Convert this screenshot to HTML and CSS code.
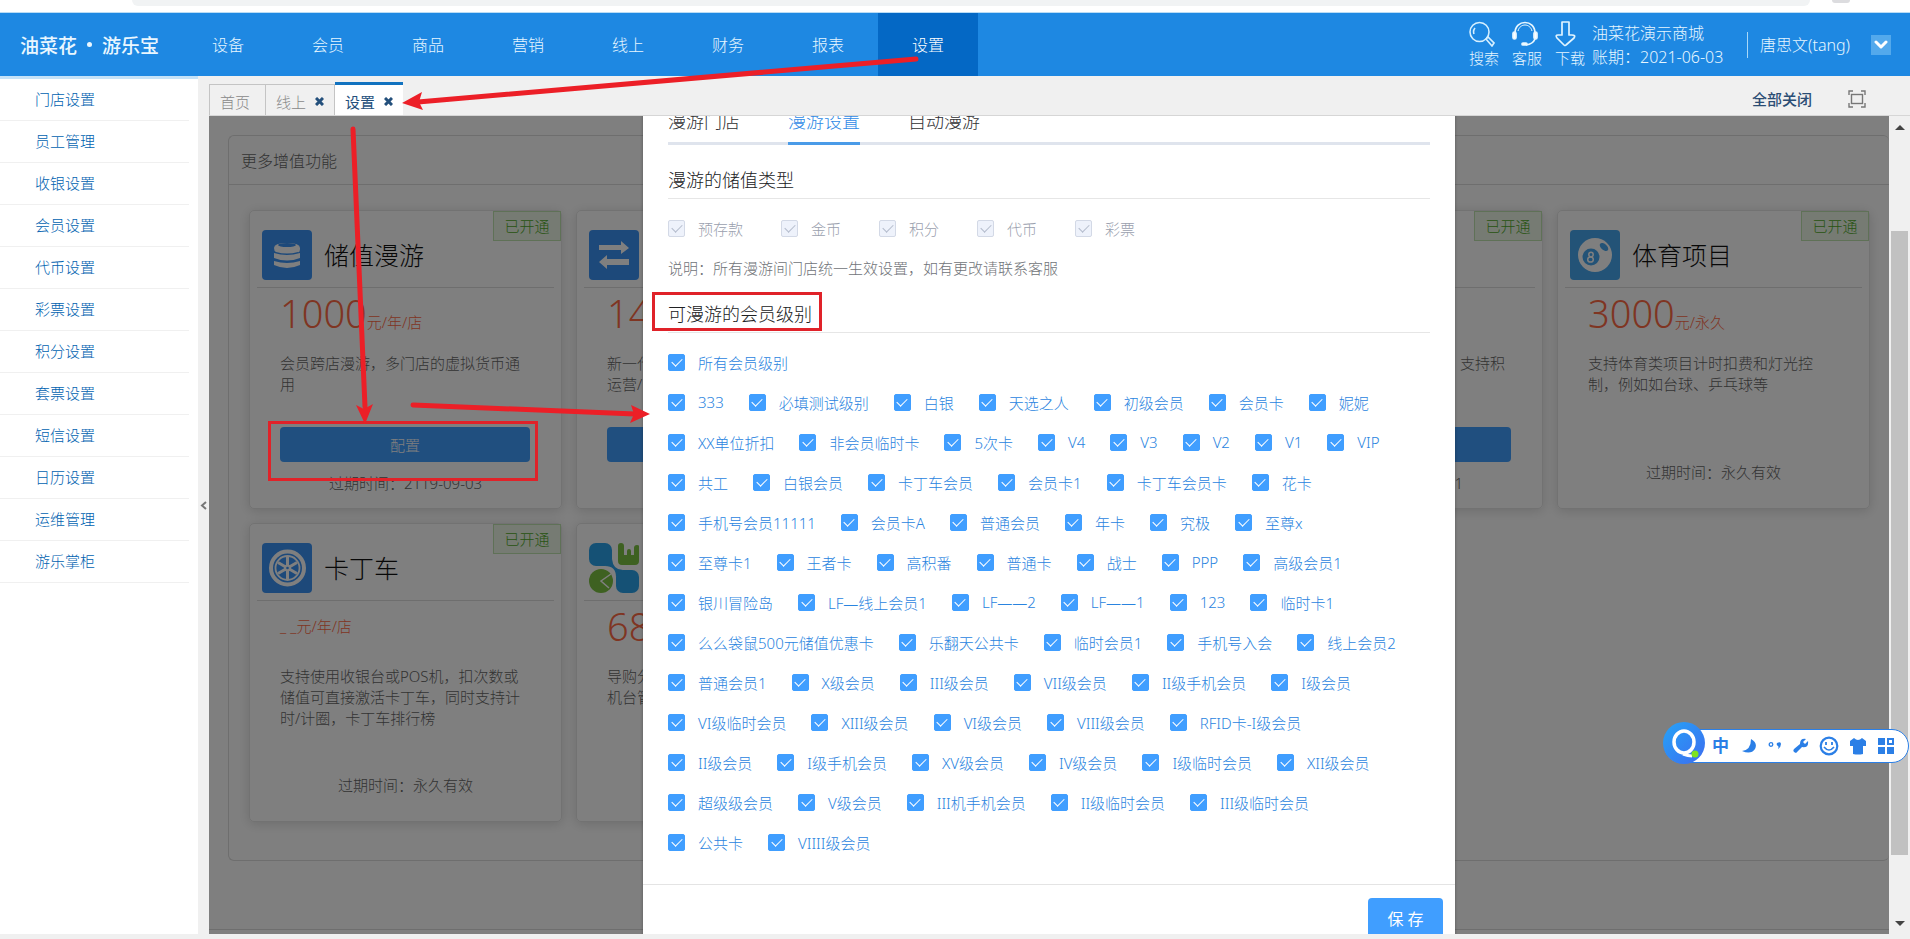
FILE: index.html
```html
<!DOCTYPE html>
<html lang="zh-CN">
<head>
<meta charset="utf-8">
<title>设置</title>
<link rel="stylesheet" href="styles.css">
</head>
<body>
<div class="browser-edge"><div class="address-pill"></div><div class="browser-dot"></div></div>
<header class="topbar">
  <div class="logo"><span>油菜花</span><i class="logo-dot"></i><span>游乐宝</span></div>
  <nav class="main-nav">
    <a href="#">设备</a><a href="#">会员</a><a href="#">商品</a><a href="#">营销</a><a href="#">线上</a><a href="#">财务</a><a href="#">报表</a><a href="#" class="active">设置</a>
  </nav>
  <div class="tools">
    <a href="#" class="tool"><svg width="26" height="26" viewBox="0 0 26 26" fill="none" stroke="#d5efff" stroke-width="1.6"><circle cx="10.500" cy="11" r="9.500"/><path d="M5 13a6 6 0 0 1 1-6M17 18l2-2 6 6-2 3z"/></svg>搜索</a>
    <a href="#" class="tool"><svg width="26" height="26" viewBox="0 0 26 26" fill="none" stroke="#e8f7ff" stroke-width="1.7"><path d="M3 12C3-2 23-2 23 12M23 18q-2 5-9 6"/><path d="M6 10C8 2 18 2 20 10" stroke-width="1"/><rect x="1" y="11" width="3" height="7" rx="1.500" fill="#fff"/><rect x="22" y="11" width="3" height="7" rx="1.500" fill="#fff"/><rect x="10" y="22" width="5" height="2" rx="1" fill="#fff"/></svg>客服</a>
    <a href="#" class="tool"><svg width="22" height="26" viewBox="0 0 22 26" fill="none" stroke="#e0f4ff" stroke-width="1.7" stroke-linejoin="round"><path d="M7 1h7v13h3q4 0 2 3l-8 7q-1 1-2 0l-7-7q-2-3 1-3h4z"/></svg>下载</a>
  </div>
  <div class="store"><span>油菜花演示商城</span><span>账期：2021-06-03</span></div>
  <div class="user">唐思文(tang)</div>
  <button class="user-menu" aria-label="用户菜单"><svg width="14" height="10" viewBox="0 0 14 10" fill="none" stroke="#fff" stroke-width="3" stroke-linecap="round" stroke-linejoin="round"><path d="M2 2l5 5 5-5"/></svg></button>
</header>
<div class="workspace">
  <aside class="sidebar">
    <a href="#">门店设置</a><a href="#">员工管理</a><a href="#">收银设置</a><a href="#">会员设置</a><a href="#">代币设置</a><a href="#">彩票设置</a><a href="#">积分设置</a><a href="#">套票设置</a><a href="#">短信设置</a><a href="#">日历设置</a><a href="#">运维管理</a><a href="#">游乐掌柜</a>
  </aside>
  <button class="collapse" aria-label="收起"><svg width="7" height="9" viewBox="0 0 7 9" fill="none" stroke="#777" stroke-width="2"><path d="M6 1L2 4.500 6 8"/></svg></button>
  <div class="page">
    <div class="tabbar">
      <div class="tab">首页</div>
      <div class="tab">线上<button class="close" aria-label="关闭"><svg width="9" height="9" viewBox="0 0 9 9" stroke="#24507c" stroke-width="3"><path d="M1 1l7 7M8 1L1 8"/></svg></button></div>
      <div class="tab current">设置<button class="close" aria-label="关闭"><svg width="9" height="9" viewBox="0 0 9 9" stroke="#24507c" stroke-width="3"><path d="M1 1l7 7M8 1L1 8"/></svg></button></div>
      <button class="close-all">全部关闭</button>
      <button class="fullscreen" aria-label="全屏"><svg width="18" height="18" viewBox="0 0 18 18" fill="none" stroke="#777" stroke-width="1.400"><path d="M1 5V1h4M13 1h4v4M17 13v4h-4M5 17H1v-4"/><rect x="3.500" y="4.500" width="11" height="9"/></svg></button>
    </div>
    <div class="stage">
      <main class="view">
        <div class="sheet">
          <section class="panel">
            <h2 class="panel-title">更多增值功能</h2>
            <div class="cards">
              <article class="card">
                <span class="badge">已开通</span>
                <div class="card-head"><svg class="card-icon" viewBox="0 0 50 50"><rect width="50" height="50" rx="4" fill="#3a92f5"/><path fill="#fff" d="M12 18q0-5 13-5t13 5-2 4q-11 3-22 0-2-1-2-4z"/><ellipse cx="25" cy="15" rx="9" ry="2" fill="#3a92f5"/><path fill="#fff" d="M12 23q13 4 26 0v5q-13 5-26 0zM12 31q13 4 26 0v4q-13 6-26 0z"/></svg><h3>储值漫游</h3></div>
                <p class="price"><b>1000</b>元/年/店</p>
                <p class="desc">会员跨店漫游，多门店的虚拟货币通用</p>
                <div class="action"><button class="config">配置</button></div>
                <p class="expire">过期时间：2119-09-03</p>
              </article>
              <article class="card">
                <div class="card-head"><svg class="card-icon" viewBox="0 0 50 50"><rect width="50" height="50" rx="4" fill="#3a92f5"/><path fill="#fff" d="M10 15h22v-4l8 7-8 6v-4H10zM40 29H18v-4l-8 7 8 7v-4h22z"/></svg></div>
                <p class="price"><b>14</b></p>
                <p class="desc">新一代<br>运营/</p>
                <div class="action"><button class="config" aria-label="配置"></button></div>
              </article>
              <article class="card"></article>
              <article class="card">
                <span class="badge">已开通</span>
                <div class="card-head"></div>
                <p class="price"></p>
                <p class="desc desc-end">支持积</p>
                <div class="action"><button class="config" aria-label="配置"></button></div>
                <p class="expire">过期时间：2120-01-01</p>
              </article>
              <article class="card">
                <span class="badge">已开通</span>
                <div class="card-head"><svg class="card-icon" viewBox="0 0 50 50"><rect width="50" height="50" rx="4" fill="#46a6ee"/><circle cx="25" cy="25" r="17" fill="#fff"/><circle cx="21" cy="27" r="8.500" fill="#46a6ee"/><ellipse cx="34" cy="17" rx="5" ry="3" transform="rotate(40 34 17)" fill="#46a6ee"/><g fill="none" stroke="#fff" stroke-width="1.500"><ellipse cx="21" cy="24.500" rx="2.200" ry="2.300"/><ellipse cx="20.500" cy="29.500" rx="2.800" ry="2.600"/></g></svg><h3>体育项目</h3></div>
                <p class="price"><b>3000</b>元/永久</p>
                <p class="desc">支持体育类项目计时扣费和灯光控制，例如如台球、乒乓球等</p>
                <div class="action"></div>
                <p class="expire">过期时间：永久有效</p>
              </article>
              <article class="card">
                <span class="badge">已开通</span>
                <div class="card-head"><svg class="card-icon" viewBox="0 0 50 50"><rect width="50" height="50" rx="4" fill="#3a92f5"/><circle cx="25.500" cy="25" r="16.500" fill="none" stroke="#fff" stroke-width="4"/><circle cx="25.500" cy="25" r="12" fill="#3a92f5" stroke="#fff" stroke-width="1.800"/><g stroke="#fff" stroke-width="3"><path d="M25.500 14v22M16 19.500l19 11M35 19.500l-19 11"/></g><circle cx="25.500" cy="25" r="3.500" fill="#fff"/><circle cx="25.500" cy="25" r="1.300" fill="#3a92f5"/></svg><h3>卡丁车</h3></div>
                <p class="price">_ _元/年/店</p>
                <p class="desc">支持使用收银台或POS机，扣次数或储值可直接激活卡丁车，同时支持计时/计圈，卡丁车排行榜</p>
                <div class="action"></div>
                <p class="expire">过期时间：永久有效</p>
              </article>
              <article class="card">
                <div class="card-head"><svg class="card-icon" viewBox="0 0 50 50"><g fill="#2ba3ea"><rect width="23" height="23" rx="7"/><rect x="27" y="27" width="23" height="23" rx="7"/><path d="M16 23l7-7q1 11 11 11l-7 7q0-11-11-11z"/></g><g fill="#7cc242"><path d="M29 3q0-3 3-3t3 3v9h3V8q0-2 2-2t2 2v4h3V5q0-3 3-3t2 3v13q0 4-4 4H33q-4 0-4-4z"/><circle cx="12" cy="38" r="12"/></g><path d="M22 31L12 38l8 7" fill="none" stroke="#fff" stroke-width="1.500"/></svg></div>
                <p class="price"><b>68</b></p>
                <p class="desc">导购分<br>机台管</p>
              </article>
            </div>
          </section>
        </div>
        <div class="mask"></div>
        <div class="dialog" role="dialog" aria-label="漫游设置">
          <div class="dialog-body">
            <div class="dialog-tabs"><button>漫游门店</button><button class="on">漫游设置</button><button>自动漫游</button></div>
            <h4>漫游的储值类型</h4>
            <div class="types">
              <label class="check"><input type="checkbox" checked disabled>预存款</label><label class="check"><input type="checkbox" checked disabled>金币</label><label class="check"><input type="checkbox" checked disabled>积分</label><label class="check"><input type="checkbox" checked disabled>代币</label><label class="check"><input type="checkbox" checked disabled>彩票</label>
            </div>
            <p class="note">说明：所有漫游间门店统一生效设置，如有更改请联系客服</p>
            <h4>可漫游的会员级别</h4>
            <div class="levels level-all"><label class="check"><input type="checkbox" checked>所有会员级别</label></div>
            <div class="levels">
              <label class="check"><input type="checkbox" checked>333</label>
              <label class="check"><input type="checkbox" checked>必填测试级别</label>
              <label class="check"><input type="checkbox" checked>白银</label>
              <label class="check"><input type="checkbox" checked>天选之人</label>
              <label class="check"><input type="checkbox" checked>初级会员</label>
              <label class="check"><input type="checkbox" checked>会员卡</label>
              <label class="check"><input type="checkbox" checked>妮妮</label>
              <label class="check"><input type="checkbox" checked>XX单位折扣</label>
              <label class="check"><input type="checkbox" checked>非会员临时卡</label>
              <label class="check"><input type="checkbox" checked>5次卡</label>
              <label class="check"><input type="checkbox" checked>V4</label>
              <label class="check"><input type="checkbox" checked>V3</label>
              <label class="check"><input type="checkbox" checked>V2</label>
              <label class="check"><input type="checkbox" checked>V1</label>
              <label class="check"><input type="checkbox" checked>VIP</label>
              <label class="check"><input type="checkbox" checked>共工</label>
              <label class="check"><input type="checkbox" checked>白银会员</label>
              <label class="check"><input type="checkbox" checked>卡丁车会员</label>
              <label class="check"><input type="checkbox" checked>会员卡1</label>
              <label class="check"><input type="checkbox" checked>卡丁车会员卡</label>
              <label class="check"><input type="checkbox" checked>花卡</label>
              <label class="check"><input type="checkbox" checked>手机号会员11111</label>
              <label class="check"><input type="checkbox" checked>会员卡A</label>
              <label class="check"><input type="checkbox" checked>普通会员</label>
              <label class="check"><input type="checkbox" checked>年卡</label>
              <label class="check"><input type="checkbox" checked>究极</label>
              <label class="check"><input type="checkbox" checked>至尊x</label>
              <label class="check"><input type="checkbox" checked>至尊卡1</label>
              <label class="check"><input type="checkbox" checked>王者卡</label>
              <label class="check"><input type="checkbox" checked>高积番</label>
              <label class="check"><input type="checkbox" checked>普通卡</label>
              <label class="check"><input type="checkbox" checked>战士</label>
              <label class="check"><input type="checkbox" checked>PPP</label>
              <label class="check"><input type="checkbox" checked>高级会员1</label>
              <label class="check"><input type="checkbox" checked>银川冒险岛</label>
              <label class="check"><input type="checkbox" checked>LF—线上会员1</label>
              <label class="check"><input type="checkbox" checked>LF——2</label>
              <label class="check"><input type="checkbox" checked>LF——1</label>
              <label class="check"><input type="checkbox" checked>123</label>
              <label class="check"><input type="checkbox" checked>临时卡1</label>
              <label class="check"><input type="checkbox" checked>么么袋鼠500元储值优惠卡</label>
              <label class="check"><input type="checkbox" checked>乐翻天公共卡</label>
              <label class="check"><input type="checkbox" checked>临时会员1</label>
              <label class="check"><input type="checkbox" checked>手机号入会</label>
              <label class="check"><input type="checkbox" checked>线上会员2</label>
              <label class="check"><input type="checkbox" checked>普通会员1</label>
              <label class="check"><input type="checkbox" checked>X级会员</label>
              <label class="check"><input type="checkbox" checked>III级会员</label>
              <label class="check"><input type="checkbox" checked>VII级会员</label>
              <label class="check"><input type="checkbox" checked>II级手机会员</label>
              <label class="check"><input type="checkbox" checked>I级会员</label>
              <label class="check"><input type="checkbox" checked>VI级临时会员</label>
              <label class="check"><input type="checkbox" checked>XIII级会员</label>
              <label class="check"><input type="checkbox" checked>VI级会员</label>
              <label class="check"><input type="checkbox" checked>VIII级会员</label>
              <label class="check"><input type="checkbox" checked>RFID卡-I级会员</label>
              <label class="check"><input type="checkbox" checked>II级会员</label>
              <label class="check"><input type="checkbox" checked>I级手机会员</label>
              <label class="check"><input type="checkbox" checked>XV级会员</label>
              <label class="check"><input type="checkbox" checked>IV级会员</label>
              <label class="check"><input type="checkbox" checked>I级临时会员</label>
              <label class="check"><input type="checkbox" checked>XII级会员</label>
              <label class="check"><input type="checkbox" checked>超级级会员</label>
              <label class="check"><input type="checkbox" checked>V级会员</label>
              <label class="check"><input type="checkbox" checked>III机手机会员</label>
              <label class="check"><input type="checkbox" checked>II级临时会员</label>
              <label class="check"><input type="checkbox" checked>III级临时会员</label>
              <label class="check"><input type="checkbox" checked>公共卡</label>
              <label class="check"><input type="checkbox" checked>VIIII级会员</label>
            </div>
          </div>
          <div class="dialog-foot"><button class="save">保 存</button></div>
        </div>
      </main>
      <div class="scrollbar">
        <svg width="10" height="5" viewBox="0 0 10 5"><path d="M0 5l5-5 5 5z" fill="#444"/></svg>
        <div class="track"><div class="thumb"></div></div>
        <svg width="10" height="5" viewBox="0 0 10 5"><path d="M0 0l5 5 5-5z" fill="#444"/></svg>
      </div>
    </div>
  </div>
</div>

<svg class="marks" width="1910" height="939" viewBox="0 0 1910 939" fill="none">
  <g stroke="#e02229" stroke-width="3"><rect x="269.500" y="422.500" width="267" height="57"/><rect x="653.500" y="293.500" width="167" height="36"/></g>
  <g stroke="#ec1f27" stroke-width="5" stroke-linecap="round"><path d="M916 59L418 102M353 129l12 278M413 405l222 9"/></g>
  <g fill="#ec1f27"><path d="M402 103l20-11-3 10 4 8zM365 424l-9-19 8 4 9-5zM650 414l-20 9 4-9-3-9z"/></g>
</svg>

<div class="ime">
  <div class="ime-logo"><svg width="42" height="42" viewBox="0 0 42 42"><defs><linearGradient id="q" x1="0" y1="0" x2="1" y2="1"><stop offset="0" stop-color="#25a3f7"/><stop offset="1" stop-color="#3d6df0"/></linearGradient></defs><circle cx="21" cy="21" r="21" fill="url(#q)"/><ellipse cx="21" cy="20" rx="10" ry="11" fill="none" stroke="#fff" stroke-width="3.500"/><path d="M20 32q5 2 9 2" stroke="#fff" stroke-width="3" fill="none"/><circle cx="32" cy="32" r="3.500" fill="#7fe31e"/></svg></div>
  <span class="ime-lang">中</span>
  <svg width="16" height="16" viewBox="0 0 16 16" fill="#2b7fe6"><path d="M10 1q7 4 4 10-4 6-13 2Q10 12 10 1z"/></svg>
  <svg width="16" height="16" viewBox="0 0 16 16"><circle cx="4" cy="6.500" r="1.800" fill="none" stroke="#2b7fe6" stroke-width="1.300"/><path d="M10 5q4-2 4 1 0 3-3 5 1-2 0-3-2-1-1-3z" fill="#2b7fe6"/></svg>
  <svg width="16" height="16" viewBox="0 0 16 16" fill="#2b7fe6"><path d="M15 3q1 7-6 6l-6 6q-4-1-2-4l6-5Q7 0 13 1l-3 3 2 2z"/></svg>
  <svg width="20" height="20" viewBox="0 0 20 20" fill="none" stroke="#2b7fe6"><circle cx="10" cy="10" r="8.300" stroke-width="2.200"/><path d="M5 11q5 6 10 0" stroke-width="1.600"/><path d="M7 6v3M13 6v3" stroke-width="1.800"/></svg>
  <svg width="18" height="18" viewBox="0 0 18 18" fill="#2b7fe6"><path d="M5 1q4 4 8 0l4 3v5h-3v8q-5 1-10 0V9H1V4z"/></svg>
  <svg width="18" height="18" viewBox="0 0 18 18" fill="#2b7fe6"><path fill-rule="evenodd" d="M1 1h7v7H1zM10 1h7v7h-7zM12 3v3h3V3zM1 10h7v7H1zM10 10h7v7h-7z"/></svg>
</div>
</body>
</html>
```
FILE: styles.css
```css
* { box-sizing: border-box; }
body {
  margin: 0;
  height: 100vh;
  overflow: hidden;
  display: flex;
  flex-direction: column;
  background: #f0f0f0;
  font-family: "Noto Sans", "Noto Sans CJK SC", sans-serif;
  font-size: 15px;
  font-weight: 300;
  color: #606266;
}
a { text-decoration: none; color: inherit; }
button { font: inherit; border: 0; padding: 0; background: none; color: inherit; }
h2, h3, h4, p { margin: 0; font-weight: inherit; }
svg { display: block; flex: none; }

.browser-edge {
  flex: none;
  height: 13px;
  display: flex;
  padding: 0 60px 0 132px;
  background: #fff;
  border-bottom: 1px solid #b9dcf5;
}
.address-pill { flex: 1; height: 6px; background: #f1f3f4; border-radius: 0 0 10px 10px; }
.browser-dot { width: 18px; height: 3px; margin-left: 22px; background: #dcdcdf; border-radius: 0 0 9px 9px; }

.topbar {
  flex: none;
  height: 63px;
  display: flex;
  align-items: center;
  background: #1e88e2;
  color: #e6f6ff;
  font-size: 16px;
}
.logo {
  width: 178px;
  padding-left: 20px;
  display: flex;
  align-items: center;
  gap: 10px;
  font-size: 19px;
  font-weight: 500;
  color: #eaf7ff;
}
.logo-dot { width: 5px; height: 5px; border-radius: 50%; background: #eaf7ff; }
.main-nav { display: flex; align-self: stretch; margin-right: auto; }
.main-nav a { width: 100px; padding-bottom: 2px; display: flex; align-items: center; justify-content: center; }
.main-nav .active { background: #0468c5; color: #fff; }
.tools { display: flex; gap: 13px; font-size: 15px; line-height: 22px; }
.tool { width: 30px; white-space: nowrap; }
.store { margin-left: 7px; width: 155px; display: flex; flex-direction: column; line-height: 24px; white-space: nowrap; }
.user { width: 124px; padding-left: 12px; border-left: 1px solid #a9d8f8; line-height: 26px; white-space: nowrap; }
.user-menu {
  width: 20px;
  height: 20px;
  margin-right: 19px;
  display: flex;
  align-items: center;
  justify-content: center;
  background: #53a9ec;
}

.workspace { flex: 1; min-height: 0; display: flex; padding-bottom: 5px; }
.sidebar {
  flex: none;
  width: 198px;
  padding-right: 9px;
  background: #fff;
  border-top: 3px solid #c4e2f8;
}
.sidebar a {
  display: block;
  padding-left: 35px;
  line-height: 41px;
  color: #0062b0;
  border-bottom: 1px solid #f0f0f0;
}
.collapse { flex: none; width: 11px; display: flex; align-items: center; justify-content: center; }
.page { flex: 1; min-width: 0; display: flex; flex-direction: column; }

.tabbar {
  flex: none;
  height: 40px;
  padding-top: 6px;
  display: flex;
  align-items: flex-end;
  border-bottom: 1px solid #d6d6d6;
}
.tab {
  height: 31px;
  padding: 3px 10px 0;
  display: flex;
  align-items: center;
  gap: 9px;
  color: #888;
  border: 1px solid #c4c4c4;
  border-bottom: 0;
}
.tab + .tab { border-left: 0; }
.tab:first-child { padding: 3px 15px 0 10px; }
.tab.current { height: 33px; background: #fff; color: #24507c; border: 0; border-top: 3px solid #1273c0; font-weight: 400; }
.close-all { margin-left: auto; align-self: center; font-weight: 500; color: #2b4d74; }
.fullscreen { margin: 0 44px 0 36px; align-self: center; }

.stage { flex: 1; min-height: 0; display: flex; }
.view { flex: 1; min-width: 0; position: relative; overflow: hidden; background: #fff; }
.sheet { padding: 19px 0 68px 19px; border-bottom: 1px solid #ddd; }
.panel { border: 1px solid #dcdcdc; border-right: 0; border-radius: 6px; overflow: hidden; }
.panel-title { height: 49px; padding-left: 12px; line-height: 50px; font-size: 16px; color: #666; border-bottom: 1px solid #dcdcdc; }
.cards {
  display: grid;
  grid-template-columns: repeat(5, 313px);
  grid-auto-rows: 299px;
  gap: 14px;
  padding: 25px 0 38px 20px;
}
.card {
  position: relative;
  padding: 19px 7px 0;
  border: 1px solid #e4e4e4;
  border-radius: 5px;
  box-shadow: 0 2px 12px rgba(0, 0, 0, .15);
}
.badge {
  position: absolute;
  top: 0;
  right: 0;
  width: 68px;
  line-height: 28px;
  text-align: center;
  background: #ecf7e6;
  border: 1px solid #bfe3ae;
  color: #4fa826;
}
.card-head { height: 58px; padding-left: 5px; display: flex; gap: 12px; border-bottom: 1px solid #ddd; }
.card-icon { width: 50px; height: 50px; }
.card h3 { font-size: 25px; line-height: 50px; color: #111; }
.price { height: 65px; padding-left: 23px; line-height: 51px; color: #ff6a45; }
.price b { font-size: 38px; font-weight: inherit; }
.desc { height: 64px; margin: 0 30px 0 23px; line-height: 21px; color: #666; }
.desc-end { text-align: right; }
.action { min-height: 46px; padding: 10px 24px 0 23px; }
.config { display: block; width: 100%; height: 35px; border-radius: 4px; background: #409eff; color: #fff; }
.expire { line-height: 22px; margin-top: 9px; text-align: center; color: #666; }
.action:empty { min-height: 35px; }

.mask { position: absolute; inset: 0; background: rgba(0, 0, 0, .5); }
.dialog {
  position: absolute;
  top: -20px;
  left: 434px;
  right: 434px;
  background: #fff;
  box-shadow: 0 1px 3px rgba(0, 0, 0, .3);
}
.dialog-body { padding: 0 25px 22px; }
.dialog-tabs { display: flex; gap: 48px; font-size: 18px; color: #303133; border-bottom: 3px solid #dfe4ed; }
.dialog-tabs button { height: 49px; line-height: 50px; padding-bottom: 3px; margin-bottom: -3px; }
.dialog-tabs .on { color: #2f8ae6; border-bottom: 3px solid #4a9be8; }
.dialog h4 { padding: 20px 0 3px; font-size: 18px; line-height: 30px; color: #202123; border-bottom: 1px solid #e6e6e6; }
.types { display: flex; gap: 38px; padding-top: 9px; color: #9aa0ae; }
.check { display: flex; align-items: center; gap: 13px; height: 40px; white-space: nowrap; }
.check input {
  appearance: none;
  width: 17px;
  height: 17px;
  margin: 0;
  border: 1px solid #409eff;
  border-radius: 2px;
  background: #409eff;
  display: flex;
  justify-content: center;
}
.check input::after {
  content: "";
  width: 5px;
  height: 9px;
  margin-top: 1px;
  border: solid #fff;
  border-width: 0 1px 1px 0;
  transform: rotate(45deg);
}
.check input:disabled { background: #eef2fb; border-color: #d3d9e6; }
.check input:disabled::after { border-color: #b4bccc; }
.note { padding-top: 9px; line-height: 22px; color: #707378; }
.level-all { padding-top: 9px; }
.levels { display: flex; flex-wrap: wrap; color: #2a84e0; }
.levels .check { margin-right: 25px; }
.dialog-foot { padding: 13px 12px 20px; display: flex; justify-content: flex-end; border-top: 1px solid #e4e4e4; }
.save { width: 75px; height: 40px; background: #409eff; color: #fff; border-radius: 4px; font-size: 16px; font-weight: 400; }

.scrollbar {
  flex: none;
  width: 21px;
  padding: 9px 2px 8px;
  display: flex;
  flex-direction: column;
  align-items: center;
  background: #f0f0f0;
}
.track { flex: 1; width: 17px; display: flex; flex-direction: column; padding: 101px 0 66px; }
.thumb { flex: 1; background: #c1c1c1; }

.marks { position: absolute; top: 0; left: 0; pointer-events: none; }
.ime {
  position: absolute;
  right: 1px;
  bottom: 176px;
  height: 34px;
  padding: 0 13px 0 47px;
  display: flex;
  align-items: center;
  gap: 10px;
  background: #fff;
  border: 1px solid #2b7fe6;
  border-radius: 17px;
}
.ime-logo { position: absolute; left: -2px; top: -8px; }
.ime-lang { margin-right: 2px; font-size: 17px; font-weight: 700; line-height: 20px; color: #2b7fe6; }
```
